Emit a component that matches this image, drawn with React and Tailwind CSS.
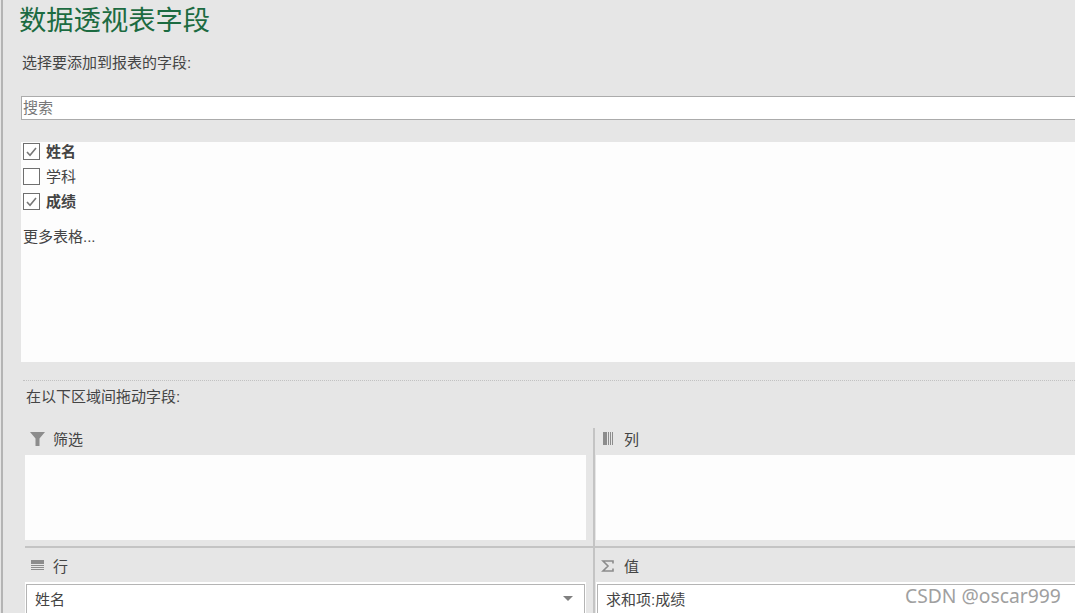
const CJK = "font-['Liberation_Sans','Noto_Sans_CJK_SC',sans-serif]";

const fields = [
  { name: "姓名", checked: true },
  { name: "学科", checked: false },
  { name: "成绩", checked: true },
];

const CheckBox = ({ checked }) => (
  <span className="flex h-[17px] w-[17px] shrink-0 items-center justify-center border border-[#6f6f6f] bg-white">
    {checked && (
      <svg width="13" height="13" viewBox="0 0 13 13" fill="none">
        <path d="M2 7l3 3.2L11 3" stroke="#777777" strokeWidth="1.6" />
      </svg>
    )}
  </span>
);

const FilterIcon = () => (
  <svg className="-mt-[2px]" width="15" height="14" viewBox="0 0 15 14">
    <path d="M0 0h15L9.5 6.5V14h-4V6.5z" fill="#8c8c8c" />
  </svg>
);

const ColumnsIcon = () => (
  <svg className="ml-[2px] -mt-[2px]" width="11" height="13" viewBox="0 0 11 13">
    <rect x="0" width="4" height="13" fill="#8c8c8c" />
    <rect x="5" width="1" height="13" fill="#8c8c8c" />
    <rect x="7" width="1" height="13" fill="#8c8c8c" />
    <rect x="9" width="1" height="13" fill="#8c8c8c" />
  </svg>
);

const RowsIcon = () => (
  <svg className="ml-px -mt-px" width="13" height="11" viewBox="0 0 13 11">
    <rect y="0" width="13" height="4" fill="#8c8c8c" />
    <rect y="5" width="13" height="1" fill="#8c8c8c" />
    <rect y="7" width="13" height="1" fill="#8c8c8c" />
    <rect y="9" width="13" height="1" fill="#8c8c8c" />
  </svg>
);

const SigmaIcon = () => (
  <svg className="-mt-px" width="13" height="12" viewBox="0 0 13 12" fill="none">
    <path d="M12 3.5V1H2L7 6L2 11H12V8.5" stroke="#8c8c8c" strokeWidth="1.6" />
  </svg>
);

const AreaHeader = ({ icon, label, className }) => (
  <div className={`flex items-center text-[15px] leading-none text-[#444444] ${className}`}>
    <span className="flex w-[28px] items-center pl-[5px]">{icon}</span>
    <span>{label}</span>
  </div>
);

const App = () => {
  return (
    <div className={`relative flex h-[613px] w-[1075px] overflow-hidden bg-[#e6e6e6] ${CJK}`}>
      {/* window edge */}
      <div className="h-full w-[5px] shrink-0 pl-px">
        <div className="h-full w-[2px] bg-[#b4b4b4]" />
      </div>

      <div className="min-w-0 flex-1">
        {/* title */}
        <div className="ml-[14px] flex h-[41px] items-center text-[27.3px] leading-none text-[#1c6b41]">
          数据透视表字段
        </div>
        <div className="ml-[17px] mt-[13px] text-[15px] leading-[18px] text-[#444444]">
          选择要添加到报表的字段:
        </div>

        {/* search */}
        <div className="ml-[16px] mt-[24px] flex h-[24px] items-center border border-r-0 border-[#ababab] bg-white pl-px pt-px text-[15px] text-[#777777]">
          搜索
        </div>

        {/* field list */}
        <div className="ml-[16px] mt-[22px] h-[220px] bg-[#fdfdfd] pl-[2px] text-[15px] text-[#444444]">
          <div className="flex flex-col gap-[8px] pt-[1px]">
            {fields.map((f) => (
              <div key={f.name} className="flex h-[17px] items-center gap-[6px]">
                <CheckBox checked={f.checked} />
                <span className={f.checked ? "mt-[2px] font-bold" : "mt-[2px]"}>{f.name}</span>
              </div>
            ))}
          </div>
          <div className="mt-[18px] leading-[18px]">更多表格...</div>
        </div>

        {/* areas */}
        <div className="ml-[18px] mt-[18px] border-t border-dotted border-[#c2c2c2]" />
        <div className="ml-[21px] mt-[7px] text-[15px] leading-[18px] text-[#444444]">
          在以下区域间拖动字段:
        </div>

        <div className="ml-[20px] mt-[22px] grid grid-cols-[570px_1fr]">
          <div className="border-r-2 border-[#c4c4c4] pr-[7px]">
            <AreaHeader icon={<FilterIcon />} label="筛选" className="h-[27px] pb-[4px]" />
            <div className="h-[85px] bg-[#fdfdfd]" />
          </div>
          <div className="pl-[1px]">
            <AreaHeader icon={<ColumnsIcon />} label="列" className="h-[27px] pb-[4px]" />
            <div className="h-[85px] bg-[#fdfdfd]" />
          </div>

          <div className="border-r-2 pt-[6px] border-[#c4c4c4]">
            <div className="border-t-2 border-[#c4c4c4] pr-[7px]">
              <AreaHeader icon={<RowsIcon />} label="行" className="h-[34px] pt-[2px]" />
              <div className="bg-white px-[1px] pt-[2px]">
                <div className="flex h-[40px] items-start justify-between border border-[#b4b4b4] pl-[8px] pr-[11px] pt-[6px] text-[15px] leading-[18px] text-[#444444]">
                  <span>姓名</span>
                  <span className="mt-[5px] h-0 w-0 border-x-[5px] border-t-[5px] border-x-transparent border-t-[#808080]" />
                </div>
              </div>
            </div>
          </div>
          <div className="pt-[6px]">
            <div className="border-t-2 border-[#c4c4c4] pl-[1px]">
              <AreaHeader icon={<SigmaIcon />} label="值" className="h-[34px] pt-[2px]" />
              <div className="bg-white pl-[1px] pt-[2px]">
                <div className="h-[40px] border border-r-0 border-[#b4b4b4] pl-[8px] pt-[6px] text-[15px] leading-[18px] text-[#444444]">
                  求和项:成绩
                </div>
              </div>
            </div>
          </div>
        </div>
      </div>

      {/* watermark */}
      <div className="absolute left-[905px] top-[582px] font-['Noto_Sans',sans-serif] text-[19.3px] leading-[27px] text-[#a0a0a0]">
        CSDN @oscar999
      </div>
    </div>
  );
};

export default App;
